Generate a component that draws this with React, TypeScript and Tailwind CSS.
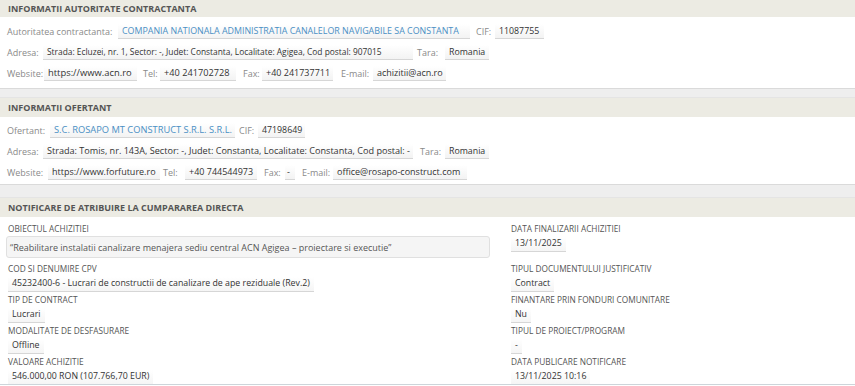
import React from "react";

const F = { fontFamily: '"Open Sans", "Liberation Sans", sans-serif' };

function L({ children, cls = "" }: { children: React.ReactNode; cls?: string }) {
  return <span className={"text-[#8a8a8a] text-[9px] " + cls}>{children}</span>;
}
function V({ children, link, cls = "" }: { children: React.ReactNode; link?: boolean; cls?: string }) {
  return (
    <span
      className={
        "inline-block overflow-visible px-[4px] leading-[14px] border-b border-[#d6d6d6] bg-gradient-to-b from-white to-[#f3f3f3] " +
        (link ? "text-[#4a8fc4] " : "text-[#333] ") +
        cls
      }
    >
      {children}
    </span>
  );
}
function Header({ children, cls = "h-[19px]" }: { children: React.ReactNode; cls?: string }) {
  return (
    <div className={"bg-[#ecebe3] flex items-center px-[8px] text-[9px] font-bold text-[#555] " + cls}>
      {children}
    </div>
  );
}
function Sep({ cls }: { cls: string }) {
  return <div className={"bg-[#eeeeee] border-t border-[#dadada] border-b border-b-[#e4e4e4] " + cls} />;
}
function Row({ children }: { children: React.ReactNode }) {
  return <div className="h-[21px] flex items-center whitespace-nowrap">{children}</div>;
}
function Field({ label, value }: { label: string; value: string }) {
  return (
    <div className="h-[31px] shrink-0 flex flex-col">
      <div className="text-[8.3px] text-[#555] uppercase leading-[11px] mt-[2px]">{label}</div>
      <div className="mt-[3px] flex">
        <span className="inline-block px-[4px] pb-[1px] leading-[13px] text-[8.8px] text-[#333] border-b border-[#d6d6d6] bg-gradient-to-b from-white to-[#f5f5f5]">
          {value}
        </span>
      </div>
    </div>
  );
}

export default function App() {
  return (
    <div style={F} className="w-[855px] h-[386px] bg-white overflow-hidden text-[9px] leading-[13px]">
      <Header cls="h-[17px]">INFORMATII AUTORITATE CONTRACTANTA</Header>
      <div className="pl-[7px] pt-[4px] pb-[4px] bg-white">
        <Row>
          <L cls="w-[111px]">Autoritatea contractanta:</L>
          <V link cls="w-[352px] text-[8.9px]">COMPANIA NATIONALA ADMINISTRATIA CANALELOR NAVIGABILE SA CONSTANTA</V>
          <L cls="ml-[6px] w-[19px]">CIF:</L>
          <V cls="w-[49px] text-[8.8px]">11087755</V>
        </Row>
        <Row>
          <L cls="w-[36px]">Adresa:</L>
          <V cls="w-[370px] text-[8.4px]">Strada: Ecluzei, nr. 1, Sector: -, Judet: Constanta, Localitate: Agigea, Cod postal: 907015</V>
          <L cls="ml-[4px] w-[28px]">Tara:</L>
          <V cls="w-[44px] text-[8.8px]">Romania</V>
        </Row>
        <Row>
          <L cls="w-[37px]">Website:</L>
          <V cls="w-[93px] text-[9.4px]">https://www.acn.ro</V>
          <L cls="ml-[6px] w-[17px]">Tel:</L>
          <V cls="w-[76px] text-[9.2px]">+40 241702728</V>
          <L cls="ml-[7px] w-[19px]">Fax:</L>
          <V cls="w-[71px] text-[9px]">+40 241737711</V>
          <L cls="ml-[8px] w-[32px]">E-mail:</L>
          <V cls="w-[73px] text-[9px]">achizitii@acn.ro</V>
        </Row>
      </div>
      <Sep cls="h-[10px]" />
      <Header>INFORMATII OFERTANT</Header>
      <div className="pl-[7px] pt-[3px] pb-[1px] bg-white">
        <Row>
          <L cls="w-[43px]">Ofertant:</L>
          <V link cls="w-[185px] text-[9.3px]">S.C. ROSAPO MT CONSTRUCT S.R.L. S.R.L.</V>
          <L cls="ml-[4px] w-[19px]">CIF:</L>
          <V cls="w-[47px] text-[8.8px]">47198649</V>
        </Row>
        <Row>
          <L cls="w-[36px]">Adresa:</L>
          <V cls="w-[370px] text-[9.1px]">Strada: Tomis, nr. 143A, Sector: -, Judet: Constanta, Localitate: Constanta, Cod postal: -</V>
          <L cls="ml-[7px] w-[25px]">Tara:</L>
          <V cls="w-[44px] text-[8.8px]">Romania</V>
        </Row>
        <Row>
          <L cls="w-[41px]">Website:</L>
          <V cls="w-[112px] text-[9px]">https://www.forfuture.ro</V>
          <L cls="ml-[3px] w-[22px]">Tel:</L>
          <V cls="w-[72px] text-[9px]">+40 744544973</V>
          <L cls="ml-[7px] w-[21px]">Fax:</L>
          <V cls="w-[10px] text-[9px] !px-[2px]">-</V>
          <L cls="ml-[7px] w-[31px]">E-mail:</L>
          <V cls="w-[134px] text-[9px]">office@rosapo-construct.com</V>
        </Row>
      </div>
      <Sep cls="h-[14px]" />
      <Header>NOTIFICARE DE ATRIBUIRE LA CUMPARAREA DIRECTA</Header>
      <div className="flex px-[8px] pt-[4px] h-[168px] overflow-hidden border-b border-[#cdd5da]">
        <div className="w-[503px] flex flex-col">
          <div className="h-[40px] shrink-0 flex flex-col">
            <div className="text-[8.3px] text-[#555] uppercase leading-[11px] mt-[2px]">OBIECTUL ACHIZITIEI</div>
            <div className="mt-[2px] -ml-[2px] w-[484px] h-[22px] bg-[#f5f5f5] border border-[#e0e0e0] rounded-[3px] flex items-center px-[3px] text-[9px] text-[#555] whitespace-nowrap">
              “Reabilitare instalatii canalizare menajera sediu central ACN Agigea – proiectare si executie”
            </div>
          </div>
          <Field label="COD SI DENUMIRE CPV" value="45232400-6 - Lucrari de constructii de canalizare de ape reziduale (Rev.2)" />
          <Field label="TIP DE CONTRACT" value="Lucrari" />
          <Field label="MODALITATE DE DESFASURARE" value="Offline" />
          <Field label="VALOARE ACHIZITIE" value="546.000,00 RON (107.766,70 EUR)" />
        </div>
        <div className="flex-1 flex flex-col">
          <div className="h-[40px] shrink-0">
            <Field label="DATA FINALIZARII ACHIZITIEI" value="13/11/2025" />
          </div>
          <Field label="TIPUL DOCUMENTULUI JUSTIFICATIV" value="Contract" />
          <Field label="FINANTARE PRIN FONDURI COMUNITARE" value="Nu" />
          <Field label="TIPUL DE PROIECT/PROGRAM" value="-" />
          <Field label="DATA PUBLICARE NOTIFICARE" value="13/11/2025 10:16" />
        </div>
      </div>
    </div>
  );
}
